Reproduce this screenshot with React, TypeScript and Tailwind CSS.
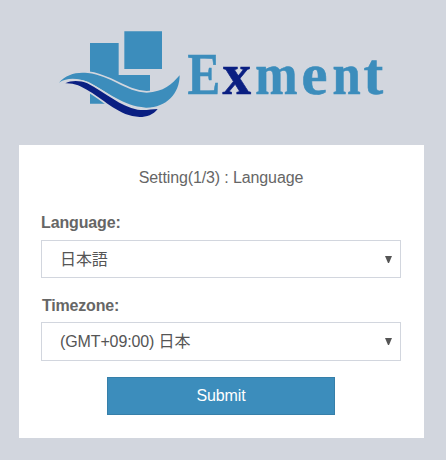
const letters = [
  { char: 'E', transform: 'translate(187.4 94) scale(0.83 1)', color: '#3c8dbc' },
  { char: 'x', transform: 'translate(222.5 94) scale(0.97 1)', color: '#0a1f82' },
  { char: 'm', transform: 'translate(255.2 94) scale(0.86 1)', color: '#3c8dbc' },
  { char: 'e', transform: 'translate(301.6 94) scale(0.99 1)', color: '#3c8dbc' },
  { char: 'n', transform: 'translate(332.4 94) scale(0.86 1)', color: '#3c8dbc' },
  { char: 't', transform: 'translate(363.5 94) scale(1 1)', color: '#3c8dbc' },
];

function Logo() {
  return (
    <svg className="block h-[145px] w-[446px] shrink-0" viewBox="0 0 446 145" role="img" aria-label="Exment">
      <g transform="translate(50 20) scale(0.33333)">
        <path fill="#3c8dbc" d="M223 34H336V147H223ZM120 69H206V165H300V235H165V251H120Z" />
        <path
          fill="#3c8dbc"
          stroke="#d2d6de"
          strokeWidth="10"
          paintOrder="stroke"
          d="M27 188C48 163 80 155 113 159C182 166 228 216 290 218C342 216 365 193 389 166C389 221 348 264 288 263C215 258 175 215 114 187C85 174 51 172 27 188Z"
        />
        <path
          fill="#0a1f82"
          stroke="#d2d6de"
          strokeWidth="10"
          paintOrder="stroke"
          d="M46 190C64 180 91 181 112 190C167 218 211 260 263 269C285 273 304 267 323 267C310 284 290 291 269 291C208 289 165 241 118 214C93 198 72 189 46 190Z"
        />
      </g>
      {letters.map(({ char, transform, color }) => (
        <text
          key={transform}
          transform={transform}
          fill={color}
          stroke={color}
          strokeWidth="0.6"
          className="font-['Liberation_Serif',serif] text-[59px] font-bold"
        >
          {char}
        </text>
      ))}
    </svg>
  );
}

function SelectBox({ value, className }: { value: string; className: string }) {
  return (
    <button
      type="button"
      className={`flex w-full items-center justify-between border border-[#d2d6de] pr-2 pl-[18px] text-left text-[#555] ${className}`}
    >
      <span className="pt-px tracking-[-0.12px]">{value}</span>
      <svg className="h-[7px] w-[7px]" viewBox="0 0 7 7" fill="#555">
        <path d="M0 0H7L4 7H3Z" />
      </svg>
    </button>
  );
}

export default function App() {
  return (
    <div className="flex h-[460px] w-[446px] flex-col overflow-hidden bg-[#d2d6de] font-['Liberation_Sans','Noto_Sans_CJK_JP',sans-serif] text-base leading-6 text-[#666]">
      <Logo />
      <main className="ml-[19px] flex h-[293px] w-[405px] flex-col bg-white pt-[21px] pr-[23px] pl-[22px]">
        <p className="text-center tracking-[-0.12px]">Setting(1/3) : Language</p>
        <label className="mt-[21px] h-[29px] font-bold tracking-[-0.13px]">Language:</label>
        <SelectBox value="日本語" className="h-[38px]" />
        <label className="mt-4 h-7 pl-px font-bold tracking-[-0.2px]">Timezone:</label>
        <SelectBox value="(GMT+09:00) 日本" className="h-[39px]" />
        <button
          type="button"
          className="mt-4 h-[38px] w-[228px] self-center border border-[#367fa9] bg-[#3c8dbc] tracking-[-0.1px] text-white"
        >
          Submit
        </button>
      </main>
    </div>
  );
}
